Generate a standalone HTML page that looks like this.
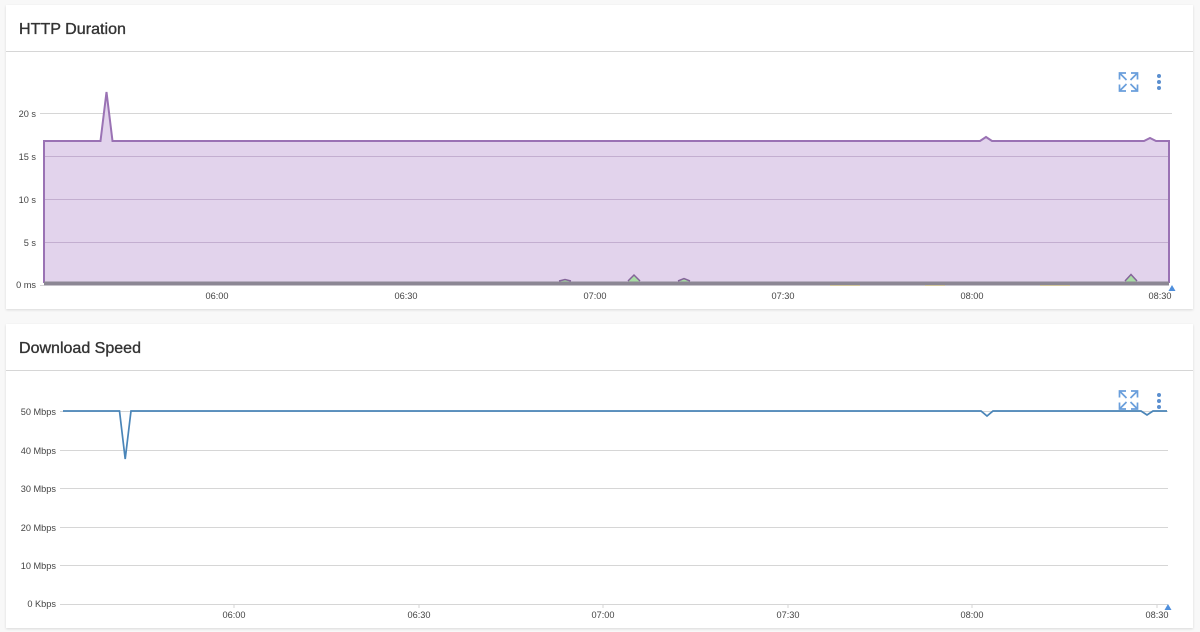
<!DOCTYPE html>
<html><head><meta charset="utf-8"><style>
html,body{margin:0;padding:0;width:1200px;height:632px;overflow:hidden;background:#f8f8f8}
svg{display:block;filter:blur(.35px)}
text{font-family:"Liberation Sans",sans-serif}
.t{font-size:16px;font-weight:400;fill:#333;stroke:#333;stroke-width:.35px}
.l{font-size:9.2px;fill:#444}
.g{stroke:#d6d6d6;stroke-width:1}
.gp{stroke:#c3aed0;stroke-width:1}
.i{fill:none;stroke:#6a9fdc;stroke-width:1.7}
</style></head><body>
<svg width="1200" height="632" viewBox="0 0 1200 632" xmlns="http://www.w3.org/2000/svg">
<defs><filter id="s" x="-2%" y="-5%" width="104%" height="110%"><feDropShadow dx="0" dy="1" stdDeviation="1.2" flood-color="#000" flood-opacity=".12"/></filter></defs>
<rect x="6" y="5" width="1187" height="304" fill="#fff" filter="url(#s)"/>
<rect x="6" y="324" width="1187" height="304" fill="#fff" filter="url(#s)"/>
<rect x="6" y="51" width="1187" height="1" fill="#d6d6d6"/>
<rect x="6" y="370" width="1187" height="1" fill="#d6d6d6"/>
<text class="t" x="19" y="34" textLength="107" lengthAdjust="spacingAndGlyphs">HTTP Duration</text>
<text class="t" x="19" y="353" textLength="122" lengthAdjust="spacingAndGlyphs">Download Speed</text>

<g class="g"><path d="M40 113.500H1172M40 285.500H44"/></g>
<path d="M44 283V141H100.500L106.500 92L112.500 141H980L986 137L992 141H1144L1150 138L1156 141H1169V283Z" fill="#e2d3ec"/>
<path d="M44 156.500H1169M44 199.500H1169M44 242.500H1169" class="gp" fill="none"/>
<path d="M44 283V141H100.500L106.500 92L112.500 141H980L986 137L992 141H1144L1150 138L1156 141H1169V283" fill="none" stroke="#9a72b4" stroke-width="2"/>
<path d="M558 283L565 279.500L572 283ZM627 283L634 275L641 283ZM677 283L684 278.500L691 283ZM1124 283L1131 274.500L1138 283Z" fill="#a9dca5"/>
<path d="M559 281L565 279.500L571 281M628 281L634 275L640 281M678 281L684 278.500L690 281M1125 281L1131 274.500L1137 281" fill="none" stroke="#84649a" stroke-width="1.500"/>
<rect x="44" y="281.500" width="1125" height="4" fill="#8c8794"/>
<path d="M830 285.500H860M925 285.500H945M1040 285.500H1070" stroke="#d3c79e" stroke-width="1"/>

<g class="l" text-anchor="end">
<text x="36" y="117">20 s</text><text x="36" y="160">15 s</text><text x="36" y="203">10 s</text><text x="36" y="246">5 s</text><text x="36" y="288">0 ms</text>
</g>
<g class="l" text-anchor="middle">
<text x="217" y="299">06:00</text><text x="406" y="299">06:30</text><text x="595" y="299">07:00</text><text x="783" y="299">07:30</text><text x="972" y="299">08:00</text><text x="1160" y="299">08:30</text>
</g>
<path d="M1172 285L1175.500 291H1168.500Z" fill="#4f8fdc"/>

<g class="g"><path d="M60 411.500H1168M60 450.500H1168M60 488.500H1168M60 527.500H1168M60 565.500H1168M60 604.500H1168"/></g>
<path d="M234 604v4M419 604v4M603 604v4M788 604v4M972 604v4M1157 604v4" stroke="#d6d6d6"/>
<path d="M63 411H119.500L125.200 459L131 411H981L987 416L993 411H1141L1147 415L1153 411H1167" fill="none" stroke="#4a85b8" stroke-width="1.700"/>
<g class="l" text-anchor="end">
<text x="56" y="415">50 Mbps</text><text x="56" y="454">40 Mbps</text><text x="56" y="492">30 Mbps</text><text x="56" y="531">20 Mbps</text><text x="56" y="569">10 Mbps</text><text x="56" y="607">0 Kbps</text>
</g>
<g class="l" text-anchor="middle">
<text x="234" y="618">06:00</text><text x="419" y="618">06:30</text><text x="603" y="618">07:00</text><text x="788" y="618">07:30</text><text x="972" y="618">08:00</text><text x="1157" y="618">08:30</text>
</g>
<path d="M1168 604L1171.500 610H1164.500Z" fill="#4f8fdc"/>

<path class="i" d="M1126 73H1119.500V79.500M1119.500 73L1126.500 80M1131 73H1137.500V79.500M1137.500 73L1130.500 80M1126 91H1119.500V84.500M1119.500 91L1126.500 84M1131 91H1137.500V84.500M1137.500 91L1130.500 84"/>
<circle cx="1159" cy="76" r="2" fill="#5b8fcf"/><circle cx="1159" cy="82" r="2" fill="#5b8fcf"/><circle cx="1159" cy="88" r="2" fill="#5b8fcf"/>
<path class="i" d="M1126 391H1119.500V397.500M1119.500 391L1126.500 398M1131 391H1137.500V397.500M1137.500 391L1130.500 398M1126 409H1119.500V402.500M1119.500 409L1126.500 402M1131 409H1137.500V402.500M1137.500 409L1130.500 402"/>
<circle cx="1159" cy="395" r="2" fill="#5b8fcf"/><circle cx="1159" cy="401" r="2" fill="#5b8fcf"/><circle cx="1159" cy="407" r="2" fill="#5b8fcf"/>
</svg>
</body></html>
